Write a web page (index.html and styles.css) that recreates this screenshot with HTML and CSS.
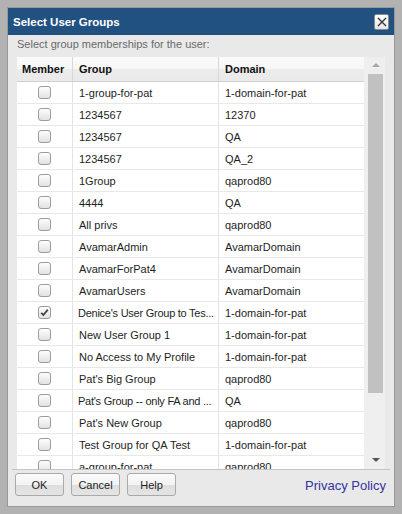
FILE: index.html
```html
<!DOCTYPE html>
<html>
<head>
<meta charset="utf-8">
<link rel="stylesheet" href="styles.css">
</head>
<body>
<div class="dialog">
  <div class="titlebar">
    <span class="title">Select User Groups</span>
    <span class="close"><svg width="10" height="10" viewBox="0 0 10 10"><path d="M1 1 L9 9 M9 1 L1 9" stroke="#333" stroke-width="1.3" fill="none"/></svg></span>
  </div>
  <div class="subtitle">Select group memberships for the user:</div>
  <div class="grid">
    <div class="table">
      <div class="row head">
        <div class="cell">Member</div>
        <div class="cell">Group</div>
        <div class="cell">Domain</div>
      </div>
      <div class="rows">
        <div class="row"><div class="cell cb"><span class="check"></span></div><div class="cell">1-group-for-pat</div><div class="cell">1-domain-for-pat</div></div>
        <div class="row"><div class="cell cb"><span class="check"></span></div><div class="cell">1234567</div><div class="cell">12370</div></div>
        <div class="row"><div class="cell cb"><span class="check"></span></div><div class="cell">1234567</div><div class="cell">QA</div></div>
        <div class="row"><div class="cell cb"><span class="check"></span></div><div class="cell">1234567</div><div class="cell">QA_2</div></div>
        <div class="row"><div class="cell cb"><span class="check"></span></div><div class="cell">1Group</div><div class="cell">qaprod80</div></div>
        <div class="row"><div class="cell cb"><span class="check"></span></div><div class="cell">4444</div><div class="cell">QA</div></div>
        <div class="row"><div class="cell cb"><span class="check"></span></div><div class="cell">All privs</div><div class="cell">qaprod80</div></div>
        <div class="row"><div class="cell cb"><span class="check"></span></div><div class="cell">AvamarAdmin</div><div class="cell">AvamarDomain</div></div>
        <div class="row"><div class="cell cb"><span class="check"></span></div><div class="cell">AvamarForPat4</div><div class="cell">AvamarDomain</div></div>
        <div class="row"><div class="cell cb"><span class="check"></span></div><div class="cell">AvamarUsers</div><div class="cell">AvamarDomain</div></div>
        <div class="row"><div class="cell cb"><span class="check checked"><svg width="9" height="9" viewBox="0 0 9 9"><path d="M1.2 4.8 L3.4 7 L7.8 1.6" stroke="#444" stroke-width="1.8" fill="none"/></svg></span></div><div class="cell trunc">Denice's User Group to Tes...</div><div class="cell">1-domain-for-pat</div></div>
        <div class="row"><div class="cell cb"><span class="check"></span></div><div class="cell">New User Group 1</div><div class="cell">1-domain-for-pat</div></div>
        <div class="row"><div class="cell cb"><span class="check"></span></div><div class="cell">No Access to My Profile</div><div class="cell">1-domain-for-pat</div></div>
        <div class="row"><div class="cell cb"><span class="check"></span></div><div class="cell">Pat's Big Group</div><div class="cell">qaprod80</div></div>
        <div class="row"><div class="cell cb"><span class="check"></span></div><div class="cell trunc">Pat's Group -- only FA and ...</div><div class="cell">QA</div></div>
        <div class="row"><div class="cell cb"><span class="check"></span></div><div class="cell">Pat's New Group</div><div class="cell">qaprod80</div></div>
        <div class="row"><div class="cell cb"><span class="check"></span></div><div class="cell">Test Group for QA Test</div><div class="cell">1-domain-for-pat</div></div>
        <div class="row"><div class="cell cb"><span class="check"></span></div><div class="cell">a-group-for-pat</div><div class="cell">qaprod80</div></div>
      </div>
    </div>
    <div class="scrollbar">
      <div class="sb-btn"><span class="arrow-up"></span></div>
      <div class="sb-track"><div class="sb-thumb"></div></div>
      <div class="sb-btn down"><span class="arrow-down"></span></div>
    </div>
  </div>
  <div class="footer">
    <div class="buttons">
      <button class="btn">OK</button>
      <button class="btn">Cancel</button>
      <button class="btn">Help</button>
    </div>
    <a class="privacy" href="#">Privacy Policy</a>
  </div>
</div>
</body>
</html>
```
FILE: styles.css
```css
html, body {
  margin: 0;
  padding: 0;
}
body {
  background: #b2b2b2;
  padding: 8px 8px 8px 8px;
  width: 386px;
  height: 498px;
  font-family: "Liberation Sans", Arial, sans-serif;
  font-size: 11px;
  color: #1e1e1e;
}
.dialog {
  width: 386px;
  height: 498px;
  background: #e9e9e9;
  display: flex;
  flex-direction: column;
  box-shadow: 0 0 0 1px #979797;
}
.titlebar {
  height: 27px;
  flex: none;
  background: #215181;
  display: flex;
  align-items: center;
  justify-content: space-between;
  padding: 0 5px 0 5px;
}
.title {
  color: #fff;
  font-weight: bold;
  font-size: 11.5px;
}
.close {
  width: 13px;
  height: 14px;
  background: linear-gradient(#ffffff, #e6e6e6);
  border: 1px solid #8a8a8a;
  border-radius: 2px;
  display: flex;
  align-items: center;
  justify-content: center;
  margin-top: 1px;
}
.subtitle {
  height: 22px;
  line-height: 18px;
  padding-left: 9px;
  color: #6a6a6a;
  flex: none;
}
.grid {
  flex: 1;
  display: flex;
  margin: 0 9px 0 9px;
  overflow: hidden;
  min-height: 0;
}
.table {
  width: 347px;
  background: #fff;
  display: flex;
  flex-direction: column;
  min-height: 0;
}
.row {
  display: grid;
  grid-template-columns: 55px 146px 146px;
  height: 22px;
  flex: none;
  border-bottom: 1px solid #e8e8e8;
  box-sizing: border-box;
}
.cell {
  display: flex;
  align-items: center;
  padding-left: 6px;
  border-left: 1px solid #e4e4e4;
  white-space: nowrap;
  overflow: hidden;
}
.cell:first-child {
  border-left: none;
}
.trunc {
  letter-spacing: -0.25px;
  padding-left: 5px;
}
.head {
  height: 25px;
  background: linear-gradient(#fbfbfb 0%, #f6f6f6 50%, #ececec 51%, #eaeaea 100%);
  border-bottom: 1px solid #cfcfcf;
  font-weight: bold;
  color: #111;
}
.head .cell {
  border-left-color: #d8d8d8;
  padding-left: 6px;
}
.head .cell:first-child {
  padding-left: 5px;
}
.rows {
  flex: 1;
  display: flex;
  flex-direction: column;
}
.cb {
  justify-content: center;
  padding-left: 0;
  padding-right: 0;
}
.check {
  width: 11px;
  height: 11px;
  border: 1px solid #9c9c9c;
  border-radius: 3px;
  background: linear-gradient(#fdfdfd, #e2e2e2);
  display: flex;
  align-items: center;
  justify-content: center;
}
.scrollbar {
  width: 21px;
  background: #efefef;
  display: flex;
  flex-direction: column;
  padding-left: 4px;
  padding-right: 2px;
  box-sizing: border-box;
}
.sb-btn {
  height: 16px;
  flex: none;
  display: flex;
  align-items: center;
  justify-content: center;
}
.sb-btn.down {
  height: 18px;
}
.arrow-up {
  width: 0;
  height: 0;
  border-left: 4px solid transparent;
  border-right: 4px solid transparent;
  border-bottom: 4px solid #a8a8a8;
}
.arrow-down {
  width: 0;
  height: 0;
  border-left: 4px solid transparent;
  border-right: 4px solid transparent;
  border-top: 4px solid #555;
}
.sb-track {
  flex: 1;
  padding-top: 1px;
}
.sb-thumb {
  height: 319px;
  background: #c1c1c1;
}
.footer {
  height: 37px;
  flex: none;
  margin: 0 4px 0 4px;
  border-top: 1px solid #c4c4c4;
  display: flex;
  align-items: flex-start;
  justify-content: space-between;
  padding: 3px 4px 0 3px;
  box-sizing: border-box;
}
.buttons {
  display: flex;
  gap: 7px;
}
.btn {
  width: 49px;
  height: 23px;
  border: 1px solid #a9a9a9;
  border-radius: 3px;
  background: linear-gradient(#fbfbfb 0%, #f3f3f3 50%, #dedede 52%, #e4e4e4 100%);
  font-family: "Liberation Sans", Arial, sans-serif;
  font-size: 11px;
  color: #1e1e1e;
  padding: 0;
}
.privacy {
  font-size: 13px;
  color: #34349e;
  text-decoration: none;
  margin-top: 5px;
}
```
